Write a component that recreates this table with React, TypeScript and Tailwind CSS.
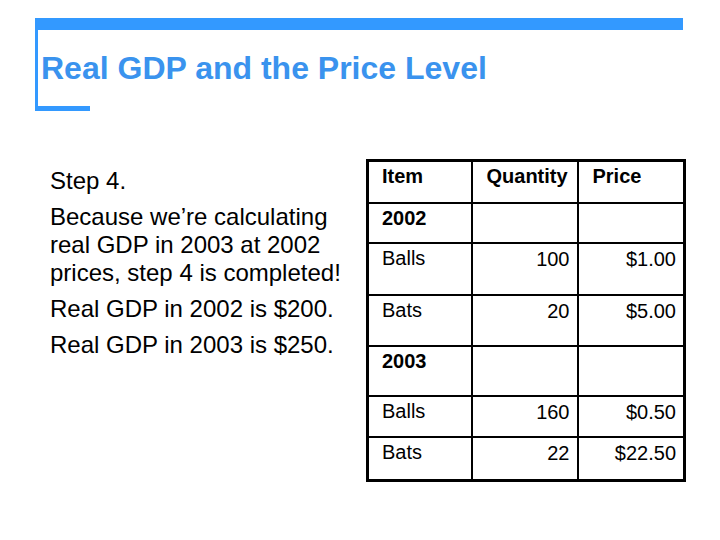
const rows = [
  { item: "2002", qty: "", price: "", year: true, h: "h-[40px]" },
  { item: "Balls", qty: "100", price: "$1.00", year: false, h: "h-[52px]" },
  { item: "Bats", qty: "20", price: "$5.00", year: false, h: "h-[51px]" },
  { item: "2003", qty: "", price: "", year: true, h: "h-[50px]" },
  { item: "Balls", qty: "160", price: "$0.50", year: false, h: "h-[41px]" },
  { item: "Bats", qty: "22", price: "$22.50", year: false, h: "h-[44px]" },
]

export default function App() {
  return (
    <div className="w-[720px] h-[540px] bg-white overflow-hidden font-['Liberation_Sans',Arial,sans-serif] text-black">
      {/* Title frame */}
      <div className="ml-[35px] pt-[18px] w-[648px]">
        <div className="h-[12px] bg-[#3399ff]" />
        <div className="h-[76px] border-l-[3px] border-[#3399ff] pl-[3px] pt-[22px]">
          <h1 className="text-[32px] leading-[32px] font-bold text-[#3a93ee]">
            Real GDP and the Price Level
          </h1>
        </div>
        <div className="w-[55px] h-[5px] bg-[#3399ff]" />
      </div>

      {/* Content */}
      <div className="flex pl-[50px] pt-[48px]">
        <div className="w-[316px] pt-[8px] text-[24px] leading-[28px] space-y-[8px]">
          <p>Step 4.</p>
          <p>
            Because we’re calculating real GDP in 2003 at 2002 prices, step 4 is completed!
          </p>
          <p>Real GDP in 2002 is $200.</p>
          <p>Real GDP in 2003 is $250.</p>
        </div>

        <table className="w-[317px] table-fixed border-collapse border-[3px] border-black text-[20px] leading-[23px]">
          <colgroup>
            <col className="w-[104px]" />
            <col className="w-[106px]" />
            <col className="w-[107px]" />
          </colgroup>
          <thead>
            <tr className="h-[42px]">
              <th className="border-2 border-black align-top text-left font-bold pl-[13px] pt-[3px]">Item</th>
              <th className="border-2 border-black align-top text-left font-bold pl-[14px] pt-[3px]">Quantity</th>
              <th className="border-2 border-black align-top text-left font-bold pl-[14px] pt-[3px]">Price</th>
            </tr>
          </thead>
          <tbody>
            {rows.map((r, i) => (
              <tr key={i} className={r.h}>
                <td className={`border-2 border-black align-top pl-[13px] pt-[3px] ${r.year ? "font-bold" : ""}`}>
                  {r.item}
                </td>
                <td className="border-2 border-black align-top text-right pr-[7px] pt-[4px]">{r.qty}</td>
                <td className="border-2 border-black align-top text-right pr-[7px] pt-[4px]">{r.price}</td>
              </tr>
            ))}
          </tbody>
        </table>
      </div>
    </div>
  )
}
